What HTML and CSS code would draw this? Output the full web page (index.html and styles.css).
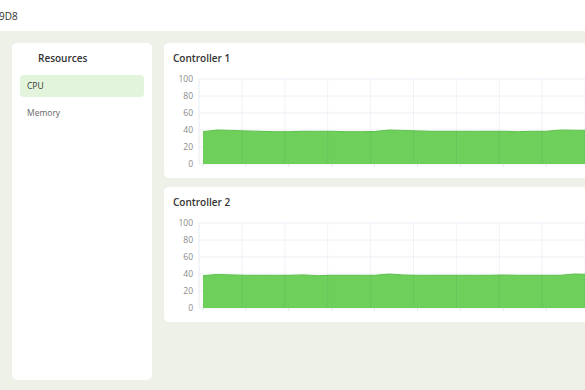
FILE: index.html
```html
<!DOCTYPE html>
<html lang="en">
<head>
  <meta charset="UTF-8" />
  <title>Controllers</title>
  <link rel="stylesheet" href="styles.css">
</head>
<body>

  <header class="topbar">
    <span class="node-id">9D8</span>
  </header>

  <main class="layout">
    <!-- Sidebar -->
    <aside class="sidebar">
      <h2>Resources</h2>
      <ul class="menu">
        <li class="active">CPU</li>
        <li>Memory</li>
      </ul>
    </aside>

    <!-- Charts -->
    <section class="charts">
      <div class="card">
        <h3>Controller 1</h3>
        <svg class="chart" id="chart1" width="460" height="100"></svg>
      </div>
      <div class="card">
        <h3>Controller 2</h3>
        <svg class="chart" id="chart2" width="460" height="100"></svg>
      </div>
    </section>
  </main>

  <script>
    const NS = 'http://www.w3.org/2000/svg';
    const TOP = 8, BOTTOM = 93, LEFT = 35, STEP = 42.9;

    function el(name, attrs) {
      const node = document.createElementNS(NS, name);
      for (const k in attrs) node.setAttribute(k, attrs[k]);
      return node;
    }

    function yOf(v) { return BOTTOM - (v / 100) * (BOTTOM - TOP); }

    function drawChart(id, data) {
      const svg = document.getElementById(id);

      // horizontal grid + labels
      for (let v = 0; v <= 100; v += 20) {
        const y = yOf(v);
        svg.appendChild(el('line', { x1: LEFT, x2: 460, y1: y, y2: y, class: 'grid' }));
        const t = el('text', { x: 29, y: y + 3, class: 'label' });
        t.textContent = v;
        svg.appendChild(t);
      }

      // area
      const dx = 14.3;
      let d = `M39 ${BOTTOM} `;
      data.forEach((v, i) => { d += `L${39 + i * dx} ${yOf(v).toFixed(1)} `; });
      d += `L${39 + (data.length - 1) * dx} ${BOTTOM} Z`;
      svg.appendChild(el('path', { d: d, class: 'area' }));

      let line = '';
      data.forEach((v, i) => { line += (i ? 'L' : 'M') + (39 + i * dx) + ' ' + yOf(v).toFixed(1) + ' '; });
      svg.appendChild(el('path', { d: line, class: 'line' }));

      // vertical grid + ticks
      for (let x = LEFT; x < 460; x += STEP) {
        svg.appendChild(el('line', { x1: x, x2: x, y1: TOP, y2: BOTTOM, class: x === LEFT ? 'axis' : 'vgrid' }));
      }
      for (let x = 39; x < 460; x += STEP) {
        svg.appendChild(el('line', { x1: x, x2: x, y1: BOTTOM, y2: BOTTOM + 3, class: 'tick' }));
      }
    }

    drawChart('chart1', [38, 40, 39.5, 39, 38.5, 38, 38, 38.5, 38.5, 38.5, 38, 38, 38.2, 40, 39.5, 39, 38.5, 38.5, 38.5, 38.5, 38.5, 38.5, 38, 38.5, 38.5, 40, 39.8, 39.5, 39, 39, 38.5, 38.5, 38.5]);
    drawChart('chart2', [38, 39.5, 39, 38.5, 38.5, 38.5, 38.5, 39, 38, 38.5, 38.5, 38.5, 38.5, 40, 38.8, 38.5, 38.5, 38.5, 38.5, 38.5, 38.5, 38.8, 38.5, 38.5, 38.5, 38.5, 40, 39.5, 39, 38.5, 38.5, 38.5, 38.5]);
  </script>
</body>
</html>
```

FILE: styles.css
```css
* { margin: 0; padding: 0; box-sizing: border-box; }
body { font-family: 'Open Sans', 'Liberation Sans', sans-serif; background-color: #eef1e7; color: #333; width: 585px; height: 390px; overflow: hidden; }

.topbar { height: 31px; background: white; display: flex; align-items: center; }
.node-id { font-size: 10px; color: #333; margin-left: -1px; }

.layout { display: flex; gap: 12px; padding: 12px 0 10px 12px; height: 359px; }

.sidebar { width: 140px; flex: none; background: white; border-radius: 5px; padding: 8px; }
.sidebar h2 { font-size: 10px; font-weight: 600; color: #333; padding-left: 18px; line-height: 15px; margin-bottom: 9px; }
.menu { list-style: none; display: flex; flex-direction: column; gap: 5px; }
.menu li { height: 22px; line-height: 22px; padding-left: 7px; font-size: 8.5px; color: #666; border-radius: 4px; }
.menu li.active { background: #e2f5dc; color: #333; }

.charts { flex: 1; min-width: 0; overflow: hidden; display: flex; flex-direction: column; gap: 9px; }
.card { width: 460px; height: 135px; flex: none; background: white; border-radius: 5px; }
.card h3 { font-size: 10px; font-weight: 600; color: #333; padding: 8px 0 0 9px; line-height: 14px; height: 28px; }
.chart { display: block; }

.grid { stroke: #eef0f6; stroke-width: 1; }
.vgrid { stroke: rgba(40, 50, 120, 0.06); stroke-width: 1; }
.axis { stroke: #e8eaf2; stroke-width: 1; }
.tick { stroke: #e3e5ec; stroke-width: 1; }
.label { font-size: 8.5px; fill: #888; text-anchor: end; }
.area { fill: #6ecf5b; }
.line { fill: none; stroke: #5ec24a; stroke-width: 1; }
```
